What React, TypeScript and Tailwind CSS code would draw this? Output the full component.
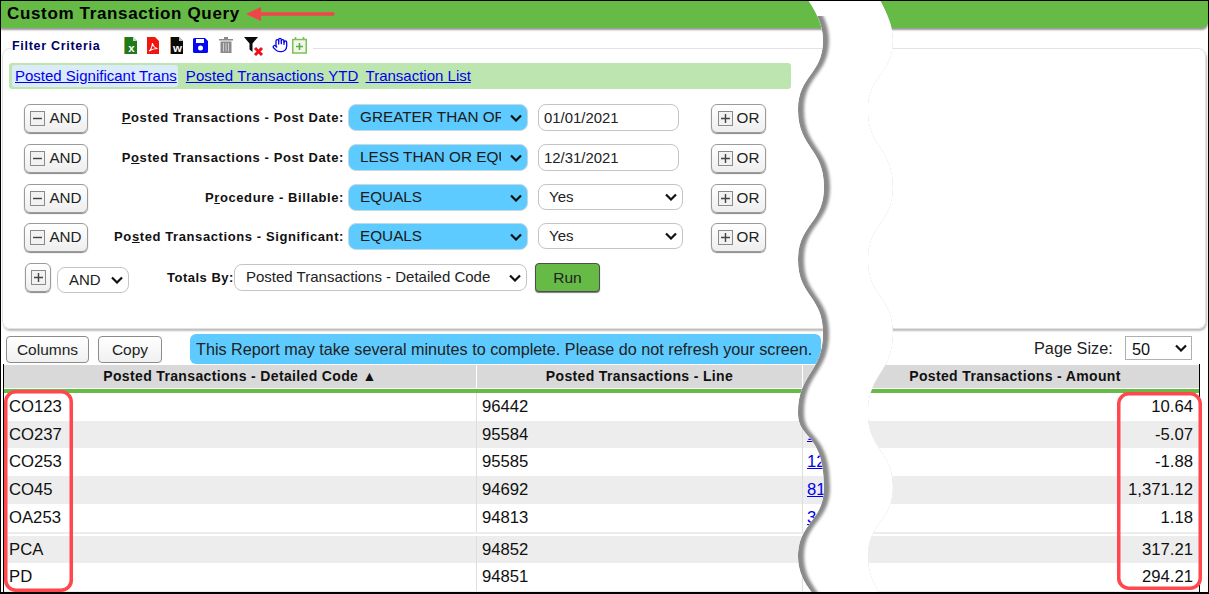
import React from "react";
import { Hand } from "lucide-react";

const FONT = "font-['Liberation_Sans',Arial,sans-serif]";

function Sel({ wrap, cls, right = "right-[6px]", children }: { wrap: string; cls: string; right?: string; children: React.ReactNode }) {
  return (
    <div className={`relative shrink-0 ${wrap}`}>
      <select className={`h-full w-full appearance-none ${cls}`}>{children}</select>
      <svg className={`pointer-events-none absolute top-1/2 -translate-y-1/2 ${right}`} width="12" height="8" viewBox="0 0 12 8">
        <path d="M1 1.500l5 5 5-5" fill="none" stroke="#111" strokeWidth="2.200" />
      </svg>
    </div>
  );
}

const blueCls = "rounded-lg border border-[#c4d8e0] bg-[#5dcbff] pl-[11px] pr-[26px] text-[15.300px] text-[#1a1a1a]";
const whiteCls = "rounded-lg border border-[#c4c4c4] bg-white pl-[10px] pr-[20px] text-[15px] text-[#222]";

function Box({ plus }: { plus?: boolean }) {
  return (
    <svg width="15" height="15" viewBox="0 0 15 15" className="shrink-0">
      <rect x="0.5" y="0.5" width="14" height="14" fill="#f2f2f2" stroke="#8a8a8a" />
      <path d={plus ? "M3 7.5h9M7.5 3v9" : "M3 7.5h9"} stroke="#444" strokeWidth="1.4" />
    </svg>
  );
}

function LogicBtn({ label, plus, w }: { label: string; plus?: boolean; w: string }) {
  return (
    <button className={`${w} flex h-[29px] shrink-0 items-center justify-center gap-[4px] rounded-md border border-[#9a9a9a] bg-gradient-to-b from-white to-[#eeeeee] text-[15.200px] text-[#222] shadow-[0_1px_1px_#888]`}>
      <Box plus={plus} />
      {label}
    </button>
  );
}

function FileIcon({ fill, letter, fold }: { fill: string; letter: string; fold: string }) {
  return (
    <svg width="14" height="17" viewBox="0 0 14 17">
      <path d="M1 0h8l4 4v13H1z" fill={fill} />
      <path d="M0 0h1v17H0z" fill={fold} />
      <path d="M9 0l4 4H9z" fill="#fff" opacity="0.75" />
      <text x="7.5" y="15" textAnchor="middle" fontSize="11.500" fontWeight="700" fontFamily="Liberation Sans" fill="#fff">{letter}</text>
    </svg>
  );
}

function Toolbar() {
  return (
    <div className="ml-[24px] flex items-start">
      <div className="w-[13px]"><FileIcon fill="#1d7a1d" letter="x" fold="#c99a2e" /></div>
      <svg className="ml-[10px]" width="12" height="17" viewBox="0 0 12 17">
        <path d="M0 0h8l4 4v13H0z" fill="#f2140f" />
        <path d="M2 14c2-1 3-4 3.500-8 .5 3 2 5 5 5.500-3 0-6 1-8.500 2.500z" fill="none" stroke="#fff" strokeWidth="1.100" />
      </svg>
      <div className="ml-[11px] w-[13px]"><FileIcon fill="#0a0a0a" letter="w" fold="#d99a3a" /></div>
      <svg className="ml-[10px] mt-[1px]" width="15" height="15" viewBox="0 0 15 15">
        <path d="M1.500 0H12l3 3v10.500A1.500 1.500 0 0 1 13.500 15h-12A1.500 1.500 0 0 1 0 13.500v-12A1.500 1.500 0 0 1 1.500 0z" fill="#0606f0" />
        <rect x="3" y="1" width="8" height="4" fill="#fff" />
        <circle cx="7.500" cy="10" r="2.500" fill="#fff" />
      </svg>
      <svg className="ml-[11px]" width="14" height="16" viewBox="0 0 14 16">
        <path d="M0 2h14v1.500H0zM5 0h4v2H5z" fill="#8a8a8a" />
        <path d="M1.500 4.500h11V16h-11z" fill="#8a8a8a" />
        <path d="M4.500 6v8.500M7 6v8.500M9.500 6v8.500" stroke="#cfcfcf" strokeWidth="1" />
      </svg>
      <svg className="ml-[11px]" width="21" height="19" viewBox="0 0 21 19">
        <path d="M0 0h14L8.500 6.500V15L5.500 12.500V6.500z" fill="#0a0a0a" />
        <path d="M11 11l7 7M18 11l-7 7" stroke="#e8141a" strokeWidth="3" />
      </svg>
      <Hand className="ml-[7px]" size={16} color="#0808e8" strokeWidth={2} />
      <svg className="ml-[4px]" width="15" height="17" viewBox="0 0 15 17">
        <rect x="0.750" y="2.500" width="13.500" height="13.500" fill="#f4f7e8" stroke="#7cc05a" strokeWidth="1.500" />
        <path d="M3.500 0v3M11.500 0v3" stroke="#7cc05a" strokeWidth="1.600" />
        <path d="M7.500 6v7M4 9.500h7" stroke="#55b04a" strokeWidth="1.600" />
      </svg>
    </div>
  );
}

const rows: [string, React.ReactNode, string, string | null][] = [
  ["h-[40px]", <><u>P</u>osted Transactions - Post Date:</>, "GREATER THAN OR EQUAL TO", "01/01/2021"],
  ["h-[40px]", <>P<u>o</u>sted Transactions - Post Date:</>, "LESS THAN OR EQUAL TO", "12/31/2021"],
  ["h-[39px]", <>P<u>r</u>ocedure - Billable:</>, "EQUALS", null],
  ["h-[40px]", <>Po<u>s</u>ted Transactions - Significant:</>, "EQUALS", null],
];

const data: [string, string, string, string, string][] = [
  ["h-[28px]", "CO123", "96442", "", "10.64"],
  ["h-[27px] [&>td]:pt-[1px]", "CO237", "95584", "1", "-5.07"],
  ["h-[28px]", "CO253", "95585", "12", "-1.88"],
  ["h-[28px]", "CO45", "94692", "81", "1,371.12"],
  ["h-[28px]", "OA253", "94813", "3", "1.18"],
];
const data2: [string, string, string, string, string][] = [
  ["h-[27px] [&>td]:pt-[1px]", "PCA", "94852", "", "317.21"],
  ["h-[28px]", "PD", "94851", "", "294.21"],
];

function Row({ d, gray }: { d: [string, string, string, string, string]; gray: boolean }) {
  return (
    <tr className={`${gray ? "bg-[#ededed]" : "bg-white"} ${d[0]}`}>
      <td className="border-r border-[#dedede] pl-[5px]">{d[1]}</td>
      <td className="border-r border-[#dedede] pl-[5px]">{d[2]}</td>
      <td className="overflow-hidden pl-[4px] text-[#0000ee] underline">{d[3]}</td>
      <td className="pr-[6px] text-right">{d[4]}</td>
    </tr>
  );
}

const L = "M808 0C816 12 823 25 823 40C823 75 798 75 798 110C798 148 824 148 824 187C824 224 798 224 798 260C798 296 823 296 823 333C823 373 798 373 798 413C798 440 824 432 824 487C824 522 798 522 798 557C798 572 805 584 813 594";
const R = "L880 594C874 584 868 572 868 557C868 522 893 522 893 487C893 450 868 450 868 413C868 373 893 373 893 333C893 296 868 296 868 260C868 224 893 224 893 187C893 148 868 148 868 110C868 75 893 75 893 40C893 25 886 12 880 0Z";
const BAND = `${L}${R}`;

export default function App() {
  return (
    <div className={`${FONT} relative flex h-[594px] w-[1209px] flex-col overflow-hidden border-b-2 border-l border-r border-t border-black bg-white text-[#111]`}>
      <header className="flex h-[27px] shrink-0 items-center rounded-br-md bg-[#66bb46] pb-[2px] pl-[6px] shadow-[0_2px_2px_#999]">
        <h1 className="text-[17px] font-bold tracking-[0.65px] text-black">Custom Transaction Query</h1>
      </header>

      <fieldset className="ml-[1px] mr-[2px] mt-[9px] h-[292px] shrink-0 rounded-lg border border-[#e2e2e2] shadow-[1px_2px_2px_#bdbdbd]">
        <legend className="ml-[8px] flex h-[22px] items-start pl-[1px] pr-[6px]">
          <span className="text-[12.500px] font-bold leading-[18px] tracking-[0.7px] text-[#000066]">Filter Criteria</span>
          <Toolbar />
        </legend>
        <div className="ml-[6px] mt-[4px] flex h-[26px] w-[782px] items-center gap-[8px] rounded-[3px] bg-[#bde5b0] pl-[3px] text-[15px] text-[#0000ee]">
          <a className="flex h-[22px] items-center rounded-[3px] bg-[#dcebf8] pl-[3px] pr-[1px] pt-[1px] underline">Posted Significant Trans</a>
          <a className="mr-[-1px] pt-[1px] tracking-[0.13px] underline">Posted Transactions YTD</a>
          <a className="pt-[1px] underline">Transaction List</a>
        </div>

        <div className="mt-[15px] flex flex-col pl-[21px]">
          {rows.map((r, i) => (
            <div key={i} className={`${r[0]} flex items-start`}>
              <LogicBtn label="AND" w="w-[64px]" />
              <label className="w-[256px] pt-[4px] text-right text-[13px] font-bold tracking-[0.6px]">{r[1]}</label>
              <Sel wrap="ml-[4px] h-[27px] w-[180px]" cls={blueCls}>
                <option>{r[2]}</option>
              </Sel>
              <div className="ml-[10px] w-[173px]">
                {r[3] ? (
                  <input defaultValue={r[3]} className="h-[27px] w-[141px] rounded-lg border border-[#c4c4c4] bg-white pl-[5px] text-[14.900px] text-[#222]" />
                ) : (
                  <Sel wrap="h-[26px] w-[145px]" cls={whiteCls}>
                    <option>Yes</option>
                  </Sel>
                )}
              </div>
              <LogicBtn label="OR" plus w="w-[55px]" />
            </div>
          ))}
          <div className="flex items-start">
            <div className="ml-[1px] flex h-[29px] w-[26px] items-center justify-center rounded-md border border-[#9a9a9a] bg-gradient-to-b from-white to-[#eeeeee] shadow-[0_1px_1px_#888]">
              <Box plus />
            </div>
            <Sel wrap="ml-[6px] mt-[4px] h-[26px] w-[72px]" cls={`${whiteCls} pl-[11px]`}>
              <option>AND</option>
            </Sel>
            <label className="ml-[38px] w-[66px] whitespace-nowrap pt-[5px] text-[13px] font-bold tracking-[0.5px]">Totals By:</label>
            <Sel wrap="ml-[1px] mt-[1px] h-[27px] w-[293px]" cls={`${whiteCls} pl-[11px]`}>
              <option>Posted Transactions - Detailed Code</option>
            </Sel>
            <button className="ml-[8px] h-[29px] w-[65px] rounded border border-[#4d4d4d] bg-[#66bb46] text-[15.500px] text-[#222] shadow-[0_1px_1px_#777]">Run</button>
          </div>
        </div>
      </fieldset>

      <div className="mt-[5px] flex h-[30px] shrink-0 items-start pl-[5px] text-[15.500px]">
        <button className="mt-[2px] h-[27px] w-[83px] rounded border border-[#8c8c8c] bg-gradient-to-b from-white to-[#f0f0f0] text-[#222]">Columns</button>
        <button className="ml-[9px] mt-[2px] h-[27px] w-[64px] rounded border border-[#8c8c8c] bg-gradient-to-b from-white to-[#f0f0f0] text-[#222]">Copy</button>
        <div className="ml-[28px] flex h-[30px] w-[631px] items-center whitespace-nowrap rounded-md bg-[#5dcbff] pl-[6px] text-[16.200px] text-[#222]">This Report may take several minutes to complete. Please do not refresh your screen.</div>
        <span className="ml-[213px] mt-[2px] w-[91px] whitespace-nowrap text-[16.300px] text-[#222]">Page Size:</span>
        <Sel wrap="mt-[2px] h-[24px] w-[67px]" cls="rounded-none border border-[#b0b0b0] bg-white pl-[6px] text-[16.300px]" right="right-[5px]">
          <option>50</option>
        </Sel>
      </div>

      <div className="ml-[2px] w-[1197px] border-l border-r border-black text-[16.700px] text-[#111]">
        <table className="w-[1195px] table-fixed border-separate border-spacing-0">
          <colgroup>
            <col className="w-[473px]" />
            <col className="w-[326px]" />
            <col className="w-[28px]" />
            <col />
          </colgroup>
          <thead>
            <tr className="text-[14px] font-bold tracking-[0.35px]">
              <th className="h-[24px] border-r border-t border-white bg-[#d9d9d9]">Posted Transactions - Detailed Code ▲</th>
              <th className="h-[24px] border-r border-t border-white bg-[#d9d9d9]">Posted Transactions - Line</th>
              <th className="h-[24px] border-t border-white bg-[#d9d9d9]" />
              <th className="h-[24px] border-t border-white bg-[#d9d9d9]">Posted Transactions - Amount</th>
            </tr>
            <tr><th colSpan={4} className="h-[5px] border-t border-white bg-[#66bb46] p-0" /></tr>
          </thead>
          <tbody>
            {data.map((d, i) => <Row key={d[1]} d={d} gray={i % 2 === 1} />)}
            <tr><td colSpan={4} className="h-[4px] border-t-2 border-[#ededed] bg-white p-0" /></tr>
            {data2.map((d, i) => <Row key={d[1]} d={d} gray={i === 0} />)}
            <tr><td colSpan={4} className="h-[2px] bg-[#ededed] p-0" /></tr>
          </tbody>
        </table>
      </div>

      {/* torn-paper band and annotations lying over the screenshot */}
      <svg className="pointer-events-none absolute left-[-1px] top-[-1px]" width="1209" height="594" viewBox="0 0 1209 594">
        <defs>
          <filter id="b" x="-20%" y="-5%" width="140%" height="110%"><feGaussianBlur stdDeviation="1.600" /></filter>
          <clipPath id="c"><path d={BAND} /></clipPath>
          <clipPath id="t"><rect x="780" y="16" width="130" height="578" /></clipPath>
        </defs>
        <path d={BAND} fill="#fff" />
        <g clipPath="url(#c)">
          <g clipPath="url(#t)"><path d={BAND} fill="#8a8a8a" /></g>
          <path d={BAND} transform="translate(6 0)" fill="#fff" filter="url(#b)" />
        </g>
        <path d="M0 0.500h1209" stroke="#000" strokeWidth="1" />
        <path d="M0 593h1209" stroke="#000" strokeWidth="2" />
        <path d="M333 14H256" stroke="#f0454a" strokeWidth="3.500" strokeLinecap="round" />
        <path d="M246 14l15-7v14z" fill="#f0454a" />
        <rect x="5.750" y="391.750" width="65.500" height="198.500" rx="10" fill="none" stroke="#ff474d" strokeWidth="3.500" />
        <rect x="1118.750" y="393.750" width="81.500" height="194.500" rx="10" fill="none" stroke="#ff474d" strokeWidth="3.500" />
      </svg>
    </div>
  );
}
